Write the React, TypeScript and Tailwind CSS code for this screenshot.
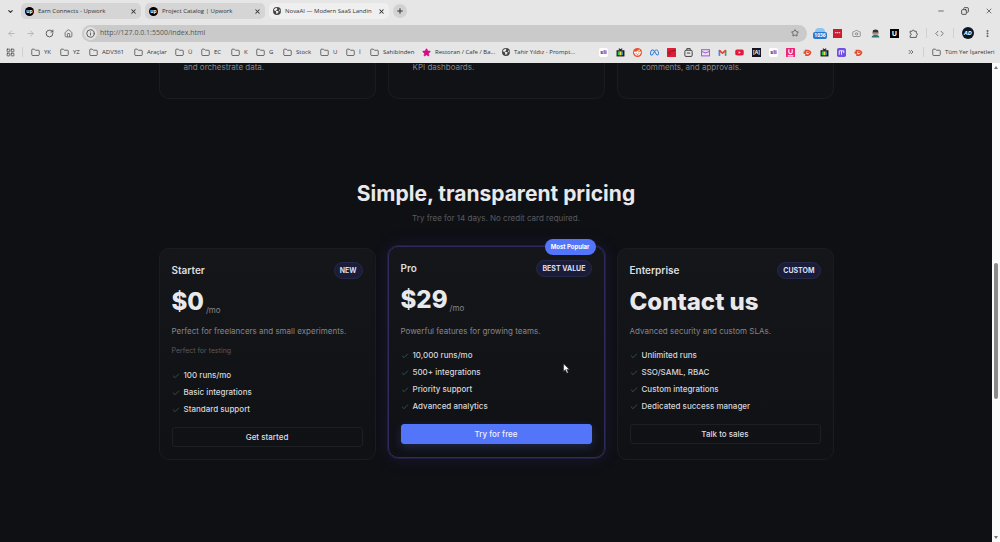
import type { ReactNode } from 'react';
import {
  ArrowLeft,
  ArrowRight,
  Camera,
  Check,
  ChevronDown,
  ChevronsRight,
  Code,
  Copy,
  EllipsisVertical,
  Folder,
  House,
  Info,
  LayoutGrid,
  Minus,
  Plus,
  RotateCw,
  Star,
  X,
} from 'lucide-react';
import { FaEarthAmericas, FaMeta, FaRedditAlien, FaYoutube } from 'react-icons/fa6';

interface Plan {
  name: string;
  badge: string;
  price: string;
  period?: string;
  description: string;
  note?: string;
  features: string[];
  action: string;
  popular?: boolean;
}

const plans: Plan[] = [
  {
    name: 'Starter',
    badge: 'NEW',
    price: '$0',
    period: '/mo',
    description: 'Perfect for freelancers and small experiments.',
    note: 'Perfect for testing',
    features: ['100 runs/mo', 'Basic integrations', 'Standard support'],
    action: 'Get started',
  },
  {
    name: 'Pro',
    badge: 'BEST VALUE',
    price: '$29',
    period: '/mo',
    description: 'Powerful features for growing teams.',
    features: ['10,000 runs/mo', '500+ integrations', 'Priority support', 'Advanced analytics'],
    action: 'Try for free',
    popular: true,
  },
  {
    name: 'Enterprise',
    badge: 'CUSTOM',
    price: 'Contact us',
    description: 'Advanced security and custom SLAs.',
    features: ['Unlimited runs', 'SSO/SAML, RBAC', 'Custom integrations', 'Dedicated success manager'],
    action: 'Talk to sales',
  },
];

const features = ['and orchestrate data.', 'KPI dashboards.', 'comments, and approvals.'];

const folders = [
  { label: 'YK', width: 'w-[29px]' },
  { label: 'YZ', width: 'w-[29px]' },
  { label: 'ADV361', width: 'w-[45px]' },
  { label: 'Araçlar', width: 'w-[41px]' },
  { label: 'Ü', width: 'w-[26px]' },
  { label: 'EC', width: 'w-[30px]' },
  { label: 'K', width: 'w-[25px]' },
  { label: 'G', width: 'w-[27px]' },
  { label: 'Stock', width: 'w-[37px]' },
  { label: 'U', width: 'w-[26px]' },
  { label: 'İ', width: 'w-[24px]' },
  { label: 'Sahibinden', width: 'w-[52px]' },
];

function UpworkIcon() {
  return (
    <span className="flex size-[9px] shrink-0 items-center justify-center rounded-full bg-black text-[5px] leading-none font-bold text-white">
      up
    </span>
  );
}

function Tab({ icon, title, active }: { icon: ReactNode; title: string; active?: boolean }) {
  return (
    <div
      className={`flex h-4 w-[120px] items-center gap-1 rounded-[5px] px-1 ${active ? 'bg-[#efefef]' : 'bg-[#d5d5d5]'}`}
    >
      {icon}
      <span className="flex-1 overflow-hidden whitespace-nowrap text-[#333]">{title}</span>
      <button aria-label={`Close ${title}`} className="flex size-2 shrink-0 items-center justify-center">
        <X className="size-[7px]" strokeWidth={3.5} />
      </button>
    </div>
  );
}

function TvIcon() {
  return (
    <svg viewBox="0 0 16 16" className="size-[9px]">
      <path d="M5 1l3 3 3-3" fill="none" stroke="#222" strokeWidth="2" />
      <rect x="1" y="4" width="14" height="11" fill="#161616" />
      <rect x="3" y="6" width="3" height="7" fill="#2fc447" />
      <rect x="6" y="6" width="3" height="7" fill="#f0dc3c" />
      <rect x="9" y="6" width="3" height="7" fill="#42a8ee" />
    </svg>
  );
}

function OrangeIcon() {
  return (
    <svg viewBox="0 0 16 16" className="size-[9px]">
      <path d="M3 3h6q5 1 6 5-1 5-6 6H4v-4H1V6h2z" fill="#e34b2c" />
      <path d="M6 6h3l3 2-3 3H6z" fill="#fff" />
      <path d="M7 8h4" stroke="#e34b2c" strokeWidth="2" />
    </svg>
  );
}

function SliIcon() {
  return (
    <span className="flex size-[9px] items-center justify-center rounded-xs bg-white text-[6px] leading-none font-bold text-[#8d183d]">
      sli
    </span>
  );
}

const shortcuts: { name: string; icon: ReactNode }[] = [
  { name: 'SLI', icon: <SliIcon /> },
  { name: 'TV', icon: <TvIcon /> },
  {
    name: 'Reddit',
    icon: (
      <span className="flex size-[9px] items-center justify-center rounded-full bg-[#e8502b] text-white">
        <FaRedditAlien className="size-[7px]" />
      </span>
    ),
  },
  { name: 'Meta', icon: <FaMeta className="size-[9px] text-[#2c7be0]" /> },
  {
    name: 'Red',
    icon: (
      <svg viewBox="0 0 16 16" className="size-[9px]">
        <rect width="16" height="16" rx="1" fill="#d91e36" />
        <path d="M1 9q6-4 14-5M3 12l4-2" stroke="#8f1020" strokeWidth="1.5" fill="none" />
      </svg>
    ),
  },
  {
    name: 'Clipboard',
    icon: (
      <svg viewBox="0 0 16 16" className="size-[9px]" fill="none" stroke="#333" strokeWidth="1.6">
        <rect x="1.5" y="4" width="13" height="11" rx="2" />
        <path d="M5 4V1h6v3M5 9h6" />
      </svg>
    ),
  },
  {
    name: 'Mail',
    icon: (
      <svg viewBox="0 0 16 16" className="size-[9px]" fill="none" stroke="#a353df" strokeWidth="1.8">
        <rect x="1" y="3" width="14" height="11" />
        <path d="M1 6l7 3 7-3" />
      </svg>
    ),
  },
  {
    name: 'Gmail',
    icon: (
      <svg viewBox="0 0 16 16" className="size-[9px]" fill="none" strokeWidth="3">
        <path d="M2.5 14V4" stroke="#4285f4" />
        <path d="M13.5 14V4" stroke="#34a853" />
        <path d="M2 4l6 5 6-5" stroke="#ea4335" />
      </svg>
    ),
  },
  { name: 'YouTube', icon: <FaYoutube className="size-[9px] text-[#e9163b]" /> },
  {
    name: 'AI',
    icon: (
      <span className="flex size-[9px] items-center justify-center bg-[#14151f] text-[5px] leading-none font-bold text-white">
        [A]
      </span>
    ),
  },
  { name: 'SLI', icon: <SliIcon /> },
  {
    name: 'Magnet',
    icon: (
      <svg viewBox="0 0 16 16" className="size-[9px]">
        <rect width="16" height="16" rx="1" fill="#ed2479" />
        <path d="M5 2v5q0 3 3 3t3-3V2M3 14h10" fill="none" stroke="#fff" strokeWidth="2" />
      </svg>
    ),
  },
  { name: 'Orange', icon: <OrangeIcon /> },
  { name: 'TV', icon: <TvIcon /> },
  {
    name: 'Notes',
    icon: (
      <svg viewBox="0 0 16 16" className="size-[9px]">
        <rect width="16" height="16" rx="3" fill="#7350e4" />
        <path d="M4 12V5h4v7M8 5h4v4" fill="none" stroke="#fff" strokeWidth="1.6" />
      </svg>
    ),
  },
  { name: 'Orange', icon: <OrangeIcon /> },
];

function TabStrip() {
  return (
    <div className="flex h-[22px] items-center pr-[7px] pl-[6px]">
      <button aria-label="Search tabs" className="mr-[6px] flex size-[9px] items-center justify-center">
        <ChevronDown className="size-[7px]" strokeWidth={4} />
      </button>
      <div className="flex gap-1">
        <Tab icon={<UpworkIcon />} title="Earn Connects - Upwork" />
        <Tab icon={<UpworkIcon />} title="Project Catalog | Upwork" />
        <Tab icon={<FaEarthAmericas className="size-2 shrink-0 text-[#444]" />} title="NovaAI — Modern SaaS Landin" active />
      </div>
      <button aria-label="New tab" className="ml-1 flex size-[14px] items-center justify-center rounded-full bg-[#d2d2d2]">
        <Plus className="size-2" strokeWidth={3} />
      </button>
      <div className="ml-auto flex gap-4">
        <button aria-label="Minimize">
          <Minus className="size-2" />
        </button>
        <button aria-label="Restore">
          <Copy className="size-2 -scale-x-100" strokeWidth={2.5} />
        </button>
        <button aria-label="Close">
          <X className="size-2" />
        </button>
      </div>
    </div>
  );
}

function Toolbar() {
  return (
    <div className="flex h-[22px] items-center pr-[8px] pl-[7px] text-[#555]">
      <div className="flex gap-[10px]">
        <button aria-label="Back" className="text-[#aaa]">
          <ArrowLeft className="size-[9px]" />
        </button>
        <button aria-label="Forward" className="text-[#aaa]">
          <ArrowRight className="size-[9px]" />
        </button>
        <button aria-label="Reload">
          <RotateCw className="size-[9px]" strokeWidth={2.5} />
        </button>
        <button aria-label="Home">
          <House className="size-[9px]" />
        </button>
      </div>
      <div className="ml-[9px] flex h-[17px] flex-1 items-center rounded-full bg-[#cacaca] pr-2 pl-[2px]">
        <span className="flex size-[13px] items-center justify-center rounded-full bg-[#e2e2e2]">
          <Info className="size-[9px]" strokeWidth={2.5} />
        </span>
        <input
          aria-label="Address"
          className="ml-[3px] min-w-0 flex-1 text-[7px] text-[#555] outline-none"
          defaultValue="http://127.0.0.1:5500/index.html"
        />
        <button aria-label="Bookmark this tab">
          <Star className="size-2" strokeWidth={2.5} />
        </button>
      </div>
      <div className="ml-[6px] flex items-center gap-[9px]">
        <button aria-label="Counter" className="flex w-[14px] flex-col items-center">
          <span className="h-1 w-[10px] rounded-t-full bg-[#8cc5ee]" />
          <span className="w-[14px] rounded-xs bg-[#2679cf] text-[5px] leading-[7px] font-bold text-white">1036</span>
        </button>
        <div className="-ml-[3px] flex items-center gap-[10px]">
          <button aria-label="Passwords" className="h-[9px] w-[9px] bg-[#cf1c2c] text-[5px] leading-[8px] text-white">
            •••
          </button>
          <button aria-label="Screenshot" className="text-[#777]">
            <Camera className="size-[9px]" />
          </button>
          <button aria-label="Reader">
            <svg viewBox="0 0 16 16" className="size-[9px]">
              <path d="M3 5q0-4 5-4t5 4v3H3z" fill="#333" />
              <rect x="3" y="6" width="10" height="4" fill="#b48484" />
              <path d="M1 15q1-5 7-5t7 5z" fill="#27786e" />
            </svg>
          </button>
          <button aria-label="Extension U" className="size-[9px] bg-black text-[7px] leading-[9px] font-bold text-white">
            U
          </button>
          <button aria-label="Extensions">
            <svg viewBox="0 0 16 16" className="size-[9px]" fill="none" stroke="currentColor" strokeWidth="1.6">
              <path d="M2 4h3.500a2 2 0 0 1 4 0H13v3.500a2 2 0 0 1 0 4V15H2v-3.500a2 2 0 0 0 0-4z" />
            </svg>
          </button>
        </div>
        <span className="-mr-[1px] -ml-[1px] h-[10px] w-px bg-[#d0d0d0]" />
        <button aria-label="Developer tools">
          <Code className="size-[9px]" />
        </button>
        <span className="h-[10px] w-px bg-[#d0d0d0]" />
        <button
          aria-label="Profile"
          className="-ml-[1px] flex size-[12px] items-center justify-center rounded-full bg-[#0b1726] text-[6px] leading-none font-bold text-white italic"
        >
          AD
        </button>
        <button aria-label="Menu">
          <EllipsisVertical className="size-[9px]" strokeWidth={3} />
        </button>
      </div>
    </div>
  );
}

function Bookmark({ icon, label, width }: { icon: ReactNode; label: string; width: string }) {
  return (
    <a href="#" className={`flex shrink-0 items-center gap-1 whitespace-nowrap ${width}`}>
      {icon}
      {label}
    </a>
  );
}

function BookmarksBar() {
  const folderIcon = <Folder className="size-[9px] shrink-0 text-[#444]" />;

  return (
    <nav aria-label="Bookmarks" className="flex h-[19px] items-center overflow-hidden pr-[7px] pb-[3px] pl-[6px]">
      <button aria-label="Tab groups">
        <LayoutGrid className="size-[9px] text-[#444]" />
      </button>
      <span className="mr-2 ml-[7px] h-[10px] w-px bg-[#d0d0d0]" />
      {folders.map((folder) => (
        <Bookmark key={folder.label} icon={folderIcon} {...folder} />
      ))}
      <Bookmark
        icon={<Star className="size-[9px] shrink-0 fill-[#d60b86] text-[#d60b86]" />}
        label="Restoran / Cafe / Ba..."
        width="w-[80px]"
      />
      <Bookmark
        icon={<FaEarthAmericas className="size-2 shrink-0 text-[#444]" />}
        label="Tahir Yıldız - Prompt..."
        width="w-[97px]"
      />
      <div className="flex gap-[8px]">
        {shortcuts.map((shortcut, index) => (
          <a key={index} href="#" aria-label={shortcut.name} className="block w-[9px]">
            {shortcut.icon}
          </a>
        ))}
      </div>
      <button aria-label="More bookmarks" className="ml-auto">
        <ChevronsRight className="size-2" />
      </button>
      <span className="mx-2 h-[10px] w-px bg-[#d0d0d0]" />
      <Bookmark icon={folderIcon} label="Tüm Yer İşaretleri" width="w-[61px]" />
    </nav>
  );
}

function PlanCard({ plan }: { plan: Plan }) {
  return (
    <article
      className={`relative flex flex-col rounded-[10px] border bg-linear-to-b from-[#15161a] to-[#101115] p-3 ${
        plan.popular
          ? '-top-[2px] border-[#2e2c5c] shadow-[0_0_18px_rgba(60,60,190,0.16)] ring-1 ring-[#1f1e40]'
          : 'border-[#1b1c20]'
      }`}
    >
      {plan.popular && (
        <span className="absolute -top-2 right-2 rounded-full bg-[#5375fa] px-[6px] text-[6px] leading-[16px] font-bold text-white">
          Most Popular
        </span>
      )}
      <header className="flex h-[18px] items-center justify-between">
        <h3 className="text-[10px] leading-[18px] font-semibold text-[#dcdde0]">{plan.name}</h3>
        <span className="rounded-full border border-[#26284a] bg-[#1b1d38] px-[5px] text-[7px] leading-[15px] font-bold text-[#dcdff0]">
          {plan.badge}
        </span>
      </header>
      <div className={`mt-[7px] flex h-8 items-end gap-[2px] ${plan.popular ? 'mb-[2px]' : ''}`}>
        <span className="text-[24px] leading-8 font-extrabold text-[#e9e9ec]">{plan.price}</span>
        {plan.period && <span className="text-[8px] leading-4 text-[#85868b]">{plan.period}</span>}
      </div>
      <p className="mt-[6px] text-[8px] leading-[14px] text-[#85868b]">{plan.description}</p>
      {plan.note && <p className="mt-[6px] text-[7px] leading-[14px] text-[#5a5b60]">{plan.note}</p>}
      <ul className="mt-[9px] text-[8px] leading-[17px] font-medium text-[#d5d6da]">
        {plan.features.map((feature) => (
          <li key={feature} className="flex items-center gap-1">
            <Check className="size-2 text-[#3f6f60]" />
            {feature}
          </li>
        ))}
      </ul>
      <button
        className={`mt-[9px] h-5 rounded-[3px] border text-[8px] font-medium ${
          plan.popular
            ? 'border-[#5375fa] bg-[#5375fa] text-[#eef1ff] shadow-[0_3px_10px_rgba(83,117,250,0.22)]'
            : 'border-[#1e1f23] text-[#dcdde0]'
        }`}
      >
        {plan.action}
      </button>
    </article>
  );
}

function Scrollbar() {
  return (
    <div aria-hidden="true" className="flex w-2 shrink-0 flex-col items-center bg-[#fafafa] py-[3px]">
      <svg viewBox="0 0 4 3" className="h-[3px] w-1">
        <path d="M0 3l2-3 2 3z" fill="#777" />
      </svg>
      <span className="flex-[194]" />
      <span className="w-1 flex-[136] rounded-full bg-[#8b8b8b]" />
      <span className="flex-[137]" />
      <svg viewBox="0 0 4 3" className="h-[3px] w-1">
        <path d="M0 0l2 3 2-3z" fill="#777" />
      </svg>
    </div>
  );
}

export default function App() {
  return (
    <div className="flex h-screen flex-col overflow-hidden bg-[#0f1014]">
      <div className="shrink-0 bg-[#e6e6e6] font-['Open_Sans','Noto_Sans',sans-serif] text-[6px] leading-[12px] text-[#333]">
        <TabStrip />
        <Toolbar />
        <BookmarksBar />
      </div>

      <div className="flex min-h-0 flex-1">
        <main className="min-w-0 flex-1 overflow-hidden font-[Inter,sans-serif]">
          <div className="mx-auto max-w-[675px]">
            {/* Tail of the features section */}
            <section className="grid grid-cols-3 gap-3">
              {features.map((text) => (
                <div
                  key={text}
                  className="h-9 rounded-b-[10px] border-x border-b border-[#1b1c20] bg-[#111216] px-6 text-[8px] leading-[9px] text-[#85868b]"
                >
                  {text}
                </div>
              ))}
            </section>

            <section className="pt-[79px]">
              <div className="text-center">
                <h2 className="text-[21px] leading-8 font-bold text-[#e9e9ec]">Simple, transparent pricing</h2>
                <p className="mt-px text-[8px] leading-[14px] text-[#5a5b60]">
                  Try free for 14 days. No credit card required.
                </p>
              </div>
              <div className="mt-[23px] grid grid-cols-3 gap-3">
                {plans.map((plan) => (
                  <PlanCard key={plan.name} plan={plan} />
                ))}
              </div>
            </section>
          </div>
        </main>
        <Scrollbar />
      </div>

      {/* Mouse pointer */}
      <svg viewBox="0 0 12 18" className="pointer-events-none absolute top-[363px] left-[563px] h-[11px] w-[7px]">
        <path d="M1 1v13l3-3 2.5 6 2.5-1-2.5-5.5H11z" fill="#fff" stroke="#222" />
      </svg>
    </div>
  );
}
